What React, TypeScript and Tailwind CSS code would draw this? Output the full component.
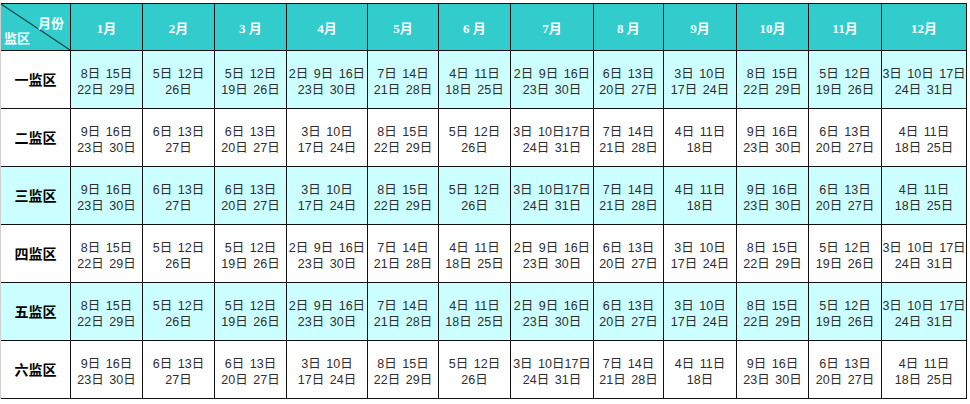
import { Fragment } from "react";

const months = ["1月", "2月", "3 月", "4月", "5月", "6 月", "7月", "8 月", "9月", "10月", "11月", "12月"];

const scheduleA = [
  ["8日 15日", "22日 29日"],
  ["5日 12日", "26日"],
  ["5日 12日", "19日 26日"],
  ["2日 9日 16日", "23日 30日"],
  ["7日 14日", "21日 28日"],
  ["4日 11日", "18日 25日"],
  ["2日 9日 16日", "23日 30日"],
  ["6日 13日", "20日 27日"],
  ["3日 10日", "17日 24日"],
  ["8日 15日", "22日 29日"],
  ["5日 12日", "19日 26日"],
  ["3日 10日 17日", "24日 31日"],
];

const scheduleB = [
  ["9日 16日", "23日 30日"],
  ["6日 13日", "27日"],
  ["6日 13日", "20日 27日"],
  ["3日 10日", "17日 24日"],
  ["8日 15日", "22日 29日"],
  ["5日 12日", "26日"],
  ["3日 10日17日", "24日 31日"],
  ["7日 14日", "21日 28日"],
  ["4日 11日", "18日"],
  ["9日 16日", "23日 30日"],
  ["6日 13日", "20日 27日"],
  ["4日 11日", "18日 25日"],
];

const rows = [
  { name: "一监区", data: scheduleA, tint: true, labelTint: false },
  { name: "二监区", data: scheduleB, tint: false, labelTint: false },
  { name: "三监区", data: scheduleB, tint: true, labelTint: true },
  { name: "四监区", data: scheduleA, tint: false, labelTint: false },
  { name: "五监区", data: scheduleA, tint: true, labelTint: true },
  { name: "六监区", data: scheduleB, tint: false, labelTint: false },
];

export default function App() {
  return (
    <div className="min-h-screen bg-white pt-[3px]">
      <div className="inline-grid grid-cols-[69px_71px_71px_71px_80px_70px_71px_82px_69px_72px_71px_72px_84px] grid-rows-[46px_repeat(6,57px)] gap-px bg-[#111] pt-px pr-px pb-px border-l border-[#cfcfcf] font-['Liberation_Sans','Noto_Sans_CJK_SC',sans-serif]">
        {/* corner cell with the diagonal split */}
        <div className="relative bg-[#33cccc] text-[13px] font-bold text-white">
          <svg className="absolute inset-0" width="69" height="46" viewBox="0 0 69 46">
            <line x1="0" y1="0" x2="69" y2="46" stroke="#114848" strokeWidth="1.2" />
          </svg>
          <span className="absolute left-[37px] top-[13px] leading-none">月份</span>
          <span className="absolute left-[3px] top-[28px] leading-none">监区</span>
        </div>
        {months.map((m) => (
          <div
            key={m}
            className="flex items-center justify-center whitespace-pre bg-[#33cccc] pt-[3px] text-[13px] font-bold text-white font-['Liberation_Serif','Noto_Sans_CJK_SC',serif]"
          >
            {m}
          </div>
        ))}

        {rows.map((row) => (
          <Fragment key={row.name}>
            <div
              className={`flex items-center justify-center pt-[2px] text-[14px] font-bold text-black ${
                row.labelTint ? "bg-[#ccffff]" : "bg-white"
              }`}
            >
              {row.name}
            </div>
            {row.data.map((cell, i) => (
              <div
                key={i}
                className={`flex flex-col items-center justify-center whitespace-pre pt-[4px] text-[12.5px] leading-[16px] text-[#2e2e2e] [word-spacing:2px] ${
                  row.tint ? "bg-[#ccffff]" : "bg-white"
                }`}
              >
                <span>{cell[0]}</span>
                <span>{cell[1]}</span>
              </div>
            ))}
          </Fragment>
        ))}
      </div>
    </div>
  );
}
